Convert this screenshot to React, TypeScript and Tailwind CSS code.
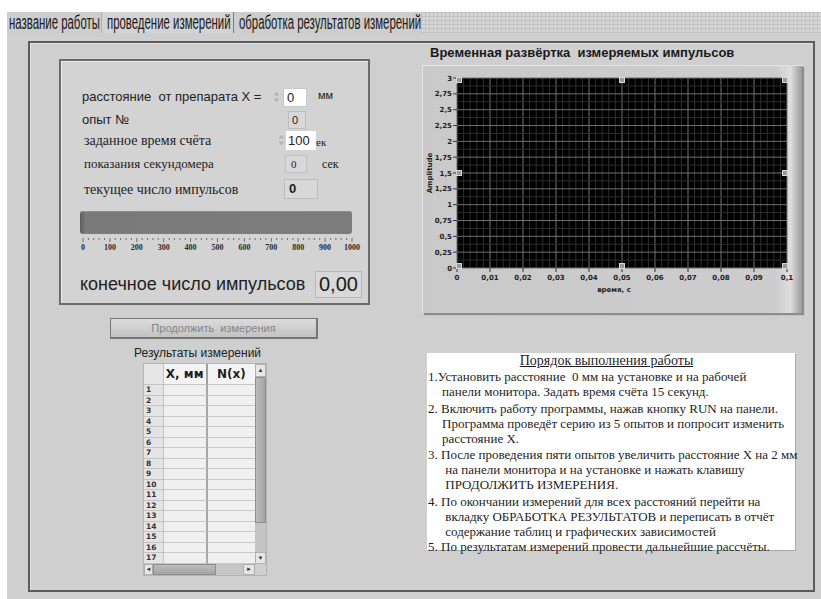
import React from "react";

const sans = "font-['Liberation_Sans',Arial,sans-serif]";
const serif = "font-['Liberation_Serif','Times_New_Roman',serif]";
const verdana = "font-['DejaVu_Sans',Verdana,sans-serif]";

function Spinner() {
    return (
        <svg width="9" height="16" viewBox="0 0 9 16" className="shrink-0">
            <path d="M4.5 2.5 L7.5 6.5 H1.5 Z" fill="#b5b5b5" />
            <path d="M4.5 13.5 L7.5 9.5 H1.5 Z" fill="#b5b5b5" />
        </svg>
    );
}

// scale under the progress bar: 0..1000
function Scale() {
    const start = 9;
    const step = 26.9;
    const labels = ["0", "100", "200", "300", "400", "500", "600", "700", "800", "900", "1000"];
    const minor = [];
    for (let i = 0; i <= 50; i++) {
        const x = start + (i * step) / 5;
        minor.push(<line key={i} x1={x} x2={x} y1={2} y2={i % 5 === 0 ? 6 : 4} stroke="#555" strokeWidth="0.8" />);
    }
    return (
        <svg width="292" height="16" className="-ml-[8px] mt-[2px] block">
            {minor}
            {labels.map((l, i) => (
                <text key={l} x={start + i * step} y={14} textAnchor="middle" fontSize="8" fontWeight="bold" fontFamily="Liberation Serif, serif" fill="#2a2a2a">
                    {l}
                </text>
            ))}
        </svg>
    );
}

function Chart() {
    const X0 = 34, X1 = 364, Y0 = 12, Y1 = 202;
    const xs = (X1 - X0) / 10;
    const ys = (Y1 - Y0) / 12;
    const yLabels = ["3", "2,75", "2,5", "2,25", "2", "1,75", "1,5", "1,25", "1", "0,75", "0,5", "0,25", "0"];
    const xLabels = ["0", "0,01", "0,02", "0,03", "0,04", "0,05", "0,06", "0,07", "0,08", "0,09", "0,1"];
    const vlines = [];
    for (let i = 0; i <= 50; i++) {
        const x = X0 + (i * xs) / 5;
        vlines.push(<line key={"v" + i} x1={x} x2={x} y1={Y0} y2={Y1} stroke={i % 5 === 0 ? "#707070" : "#2e2e2e"} strokeWidth="1" />);
    }
    const hlines = [];
    for (let j = 0; j <= 24; j++) {
        const y = Y0 + (j * ys) / 2;
        hlines.push(<line key={"h" + j} x1={X0} x2={X1} y1={y} y2={y} stroke={j % 2 === 0 ? "#707070" : "#2e2e2e"} strokeWidth="1" />);
    }
    const marks: [number, number][] = [
        [X0 + 2, Y0 + 2], [(X0 + X1) / 2, Y0 + 2], [X1 - 2, Y0 + 2],
        [X0 + 2, (Y0 + Y1) / 2], [X1 - 2, (Y0 + Y1) / 2],
        [X0 + 2, Y1 - 2], [(X0 + X1) / 2, Y1 - 2], [X1 - 2, Y1 - 2],
    ];
    return (
        <svg width="376" height="244" className="block">
            <rect x={X0} y={Y0} width={X1 - X0} height={Y1 - Y0} fill="#000" />
            {vlines}
            {hlines}
            {yLabels.map((l, i) => (
                <g key={l}>
                    <line x1={X0 - 4} x2={X0} y1={Y0 + i * ys} y2={Y0 + i * ys} stroke="#333" />
                    <text x={X0 - 5} y={Y0 + i * ys + 2.5} textAnchor="end" fontSize="7" fontWeight="bold" fontFamily="DejaVu Sans, sans-serif" fill="#222">
                        {l}
                    </text>
                </g>
            ))}
            {xLabels.map((l, i) => (
                <g key={l}>
                    <line x1={X0 + i * xs} x2={X0 + i * xs} y1={Y1} y2={Y1 + 4} stroke="#333" />
                    <text x={X0 + i * xs} y={Y1 + 12} textAnchor="middle" fontSize="7" fontWeight="bold" fontFamily="DejaVu Sans, sans-serif" fill="#222">
                        {l}
                    </text>
                </g>
            ))}
            <text x={(X0 + X1) / 2 - 8} y={Y1 + 24} textAnchor="middle" fontSize="7" fontWeight="bold" fontFamily="DejaVu Sans, sans-serif" fill="#222">
                время, с
            </text>
            <text transform={`translate(9 ${(Y0 + Y1) / 2}) rotate(-90)`} textAnchor="middle" fontSize="7" fontWeight="bold" fontFamily="DejaVu Sans, sans-serif" fill="#222">
                Amplitude
            </text>
            {marks.map(([x, y], i) => (
                <rect key={i} x={x - 2.5} y={y - 2.5} width="5" height="5" fill="#9a9a9a" stroke="#d8d8d8" strokeWidth="1" />
            ))}
        </svg>
    );
}

function ResultsTable() {
    const rows = Array.from({ length: 17 }, (_, i) => i + 1);
    return (
        <div className="ml-[113px] mt-[3px] w-[124px] h-[213px] border border-[#b4b4b4] bg-[#cacaca] flex flex-col">
            <div className="flex h-[200px]">
                <div className="w-[112px] overflow-hidden">
                    {/* header */}
                    <div className={`flex h-[21px] ${verdana} text-[12px] font-bold text-[#1e1e1e]`}>
                        <div className="w-[20px] bg-[#e6e6e6] border-r border-b border-[#c4c4c4]" />
                        <div className="w-[44px] bg-[#f4f4f4] border-r-2 border-b border-r-[#a0a0a0] border-b-[#c4c4c4] flex items-center justify-center whitespace-nowrap">X, мм</div>
                        <div className="w-[48px] bg-[#f4f4f4] border-b border-[#c4c4c4] flex items-center justify-center">N(x)</div>
                    </div>
                    {rows.map((n) => (
                        <div key={n} className={`flex h-[10.5px] ${verdana} text-[7.5px] font-bold leading-[10px] text-[#333]`}>
                            <div className="w-[20px] bg-[#e4e4e4] border-r border-b border-[#c4c4c4] pl-[2px]">{n}</div>
                            <div className="w-[44px] bg-[#f0f0f0] border-r-2 border-b border-r-[#a8a8a8] border-b-[#c8c8c8]" />
                            <div className="w-[48px] bg-[#f0f0f0] border-b border-[#c8c8c8]" />
                        </div>
                    ))}
                </div>
                {/* vertical scrollbar */}
                <div className="w-[11px] flex flex-col bg-[#c4c4c4]">
                    <div className="h-[13px] bg-[#e6e6e6] border border-[#b0b0b0] text-[6px] leading-[11px] text-center text-[#333]">▲</div>
                    <div className="h-[146px] bg-[linear-gradient(90deg,#bcbcbc,#a4a4a4)] border border-[#8e8e8e]" />
                    <div className="flex-1" />
                    <div className="h-[12px] bg-[#e6e6e6] border border-[#b0b0b0] text-[6px] leading-[10px] text-center text-[#333]">▼</div>
                </div>
            </div>
            {/* horizontal scrollbar */}
            <div className="flex h-[11px]">
                <div className="w-[112px] flex bg-[#c6c6c6]">
                    <div className="w-[9px] bg-[#e6e6e6] border border-[#b0b0b0] text-[6px] leading-[9px] text-center text-[#333]">◄</div>
                    <div className="w-[63px] bg-[linear-gradient(#bcbcbc,#a4a4a4)] border border-[#8e8e8e]" />
                    <div className="flex-1" />
                    <div className="w-[12px] bg-[#e6e6e6] border border-[#b0b0b0] text-[6px] leading-[9px] text-center text-[#333]">►</div>
                </div>
                <div className="w-[11px] bg-[#cfcfcf]" />
            </div>
        </div>
    );
}

const steps: { text: string; indent: boolean; gap?: boolean }[] = [
    { text: "1.Установить расстояние  0 мм на установке и на рабочей", indent: false },
    { text: "панели монитора. Задать время счёта 15 секунд.", indent: true },
    { text: "2. Включить работу программы, нажав кнопку RUN на панели.", indent: false, gap: true },
    { text: "Программа проведёт серию из 5 опытов и попросит изменить", indent: true },
    { text: "расстояние X.", indent: true },
    { text: "3. После проведения пяти опытов увеличить расстояние X на 2 мм", indent: false, gap: true },
    { text: " на панели монитора и на установке и нажать клавишу", indent: true },
    { text: " ПРОДОЛЖИТЬ ИЗМЕРЕНИЯ.", indent: true },
    { text: "4. По окончании измерений для всех расстояний перейти на", indent: false, gap: true },
    { text: " вкладку ОБРАБОТКА РЕЗУЛЬТАТОВ и переписать в отчёт", indent: true },
    { text: " содержание таблиц и графических зависимостей", indent: true },
    { text: "5. По результатам измерений провести дальнейшие рассчёты.", indent: false },
];

export default function App() {
    return (
        <div className="w-[821px] h-[599px] bg-white overflow-hidden">
            {/* Tabs */}
            <div className={`h-[33px] pt-[12px] pl-[7px] flex ${sans} text-[20px] text-[#1a1a1a]`}>
                <div className="w-[95px] h-[21px] bg-[#cdcdcd] border-r border-[#b0b0b0] pl-[2px] leading-[20px] overflow-hidden">
                    <span className="inline-block origin-left scale-x-[0.57] whitespace-nowrap">название работы</span>
                </div>
                <div className="w-[131px] h-[21px] bg-[#d3d3d3] pl-[5px] leading-[20px] overflow-hidden">
                    <span className="inline-block origin-left scale-x-[0.57] whitespace-nowrap">проведение измерений</span>
                </div>
                <div className="w-[188px] h-[21px] bg-[#cdcdcd] border-l border-[#7a7a7a] pl-[5px] leading-[20px] overflow-hidden">
                    <span className="inline-block origin-left scale-x-[0.57] whitespace-nowrap">обработка результатов измерений</span>
                </div>
                <div className="flex-1 h-[21px] bg-[#d6d6d6] bg-[linear-gradient(90deg,#c2c2c2_1px,transparent_1px),linear-gradient(#c2c2c2_1px,transparent_1px)] bg-[length:4px_4px]" />
            </div>

            {/* Panel body */}
            <div className="ml-[7px] h-[566px] bg-[#cfcfcf] pt-[8px] pl-[21px]">
                <div className="w-[787px] h-[551px] border-2 border-[#5c5c5c] shadow-[inset_1px_1px_0_#e2e2e2] flex">
                    {/* left column */}
                    <div className="w-[340px] shrink-0">
                        <div className={`ml-[29px] mt-[16px] w-[311px] h-[246px] border-2 border-[#6b6b6b] bg-[#d3d3d3] shadow-[inset_1px_1px_0_#ececec] pl-[21px] pt-[26px] text-[#222]`}>
                            <div className="flex items-center h-[20px]">
                                <span className={`w-[190px] ${sans} text-[13px] whitespace-pre`}>расстояние  от препарата X =</span>
                                <Spinner />
                                <div className={`ml-[2px] w-[24px] h-[19px] bg-white border border-[#c8c8c8] ${sans} text-[13px] leading-[18px] pl-[3px]`}>0</div>
                                <span className={`ml-[11px] -mt-[4px] ${sans} text-[11px]`}>мм</span>
                            </div>
                            <div className="flex items-center h-[20px] mt-[3px]">
                                <span className={`w-[206px] ${sans} text-[13px]`}>опыт №</span>
                                <div className={`w-[18px] h-[18px] bg-[#d8d8d8] border border-[#bdbdbd] ${sans} text-[11px] leading-[16px] pl-[3px]`}>0</div>
                            </div>
                            <div className="flex items-center h-[20px]">
                                <span className={`ml-[2px] w-[193px] ${serif} text-[14px]`}>заданное время счёта</span>
                                <Spinner />
                                <div className={`w-[30px] h-[19px] bg-white ${sans} text-[13px] leading-[19px] pl-[2px]`}>100</div>
                                <span className={`mt-[5px] ${serif} text-[11px]`}>ек</span>
                            </div>
                            <div className="flex items-center h-[20px] mt-[4px]">
                                <span className={`ml-[2px] w-[201px] ${serif} text-[13px]`}>показания секундомера</span>
                                <div className={`w-[22px] h-[18px] bg-[#d8d8d8] border border-[#c2c2c2] ${serif} text-[11px] leading-[16px] pl-[5px]`}>0</div>
                                <span className={`ml-[15px] ${serif} text-[12px]`}>сек</span>
                            </div>
                            <div className="flex items-center h-[20px] mt-[5px]">
                                <span className={`ml-[2px] w-[200px] ${serif} text-[14px]`}>текущее число импульсов</span>
                                <div className={`w-[34px] h-[20px] bg-[#d8d8d8] border border-[#bcbcbc] ${sans} text-[13px] font-bold leading-[18px] pl-[4px]`}>0</div>
                            </div>
                            {/* progress bar */}
                            <div className="-ml-[2px] mt-[12px] w-[272px] h-[23px] rounded-[3px] bg-[linear-gradient(90deg,#5e5e5e,#7a7a7a_2%,#7c7c7c)] shadow-[inset_0_1px_0_#8e8e8e]" />
                            <Scale />
                            <div className="-ml-[2px] mt-[18px] flex items-center h-[28px]">
                                <span className={`w-[235px] ${sans} text-[18px] whitespace-nowrap text-[#1f1f1f]`}>конечное число импульсов</span>
                                <div className={`w-[47px] h-[27px] bg-[#d8d8d8] border border-[#b8b8b8] ${sans} text-[20px] leading-[25px] pl-[3px] text-[#1a1a1a]`}>0,00</div>
                            </div>
                        </div>

                        <div className={`ml-[80px] mt-[13px] w-[208px] h-[21px] border border-[#777] border-r-2 border-b-2 bg-[linear-gradient(#dcdcdc,#c2c2c2)] flex items-center justify-center ${sans} text-[11px] text-[#858585] whitespace-pre`}>
                            Продолжить  измерения
                        </div>
                        <div className={`ml-[104px] mt-[8px] h-[13px] ${sans} text-[12px] leading-[13px] text-[#222]`}>Результаты измерений</div>
                        <ResultsTable />
                    </div>

                    {/* right column */}
                    <div className="ml-[52px] shrink-0">
                        <div className={`mt-[2px] h-[16px] pl-[8px] ${sans} text-[13px] font-bold leading-[16px] text-[#1a1a1a]`}>
                            <span className="whitespace-pre">Временная развёртка  измеряемых импульсов</span>
                        </div>
                        <div className="mt-[4px] w-[380px] h-[248px] bg-[linear-gradient(90deg,#c9c9c9,#cdcdcd_93%,#dedede_97%,#9a9a9a)] border-t border-l border-[#e4e4e4] shadow-[2px_2px_1px_#8c8c8c]">
                            <Chart />
                        </div>
                        <div className={`ml-[5px] mt-[40px] w-[368px] h-[197px] bg-white shadow-[1px_1px_0_#a8a8a8] ${serif} text-[13px] leading-[15px] text-[#1e1e1e] pl-[1px]`}>
                            <div className="text-center text-[14px] leading-[16px] underline pr-[10px]">Порядок выполнения работы</div>
                            {steps.map((s, i) => (
                                <div key={i} className={`whitespace-pre ${s.indent ? "pl-[14px]" : ""} ${s.gap ? "mt-[1.5px]" : ""}`}>
                                    {s.text}
                                </div>
                            ))}
                        </div>
                    </div>
                </div>
            </div>
        </div>
    );
}
